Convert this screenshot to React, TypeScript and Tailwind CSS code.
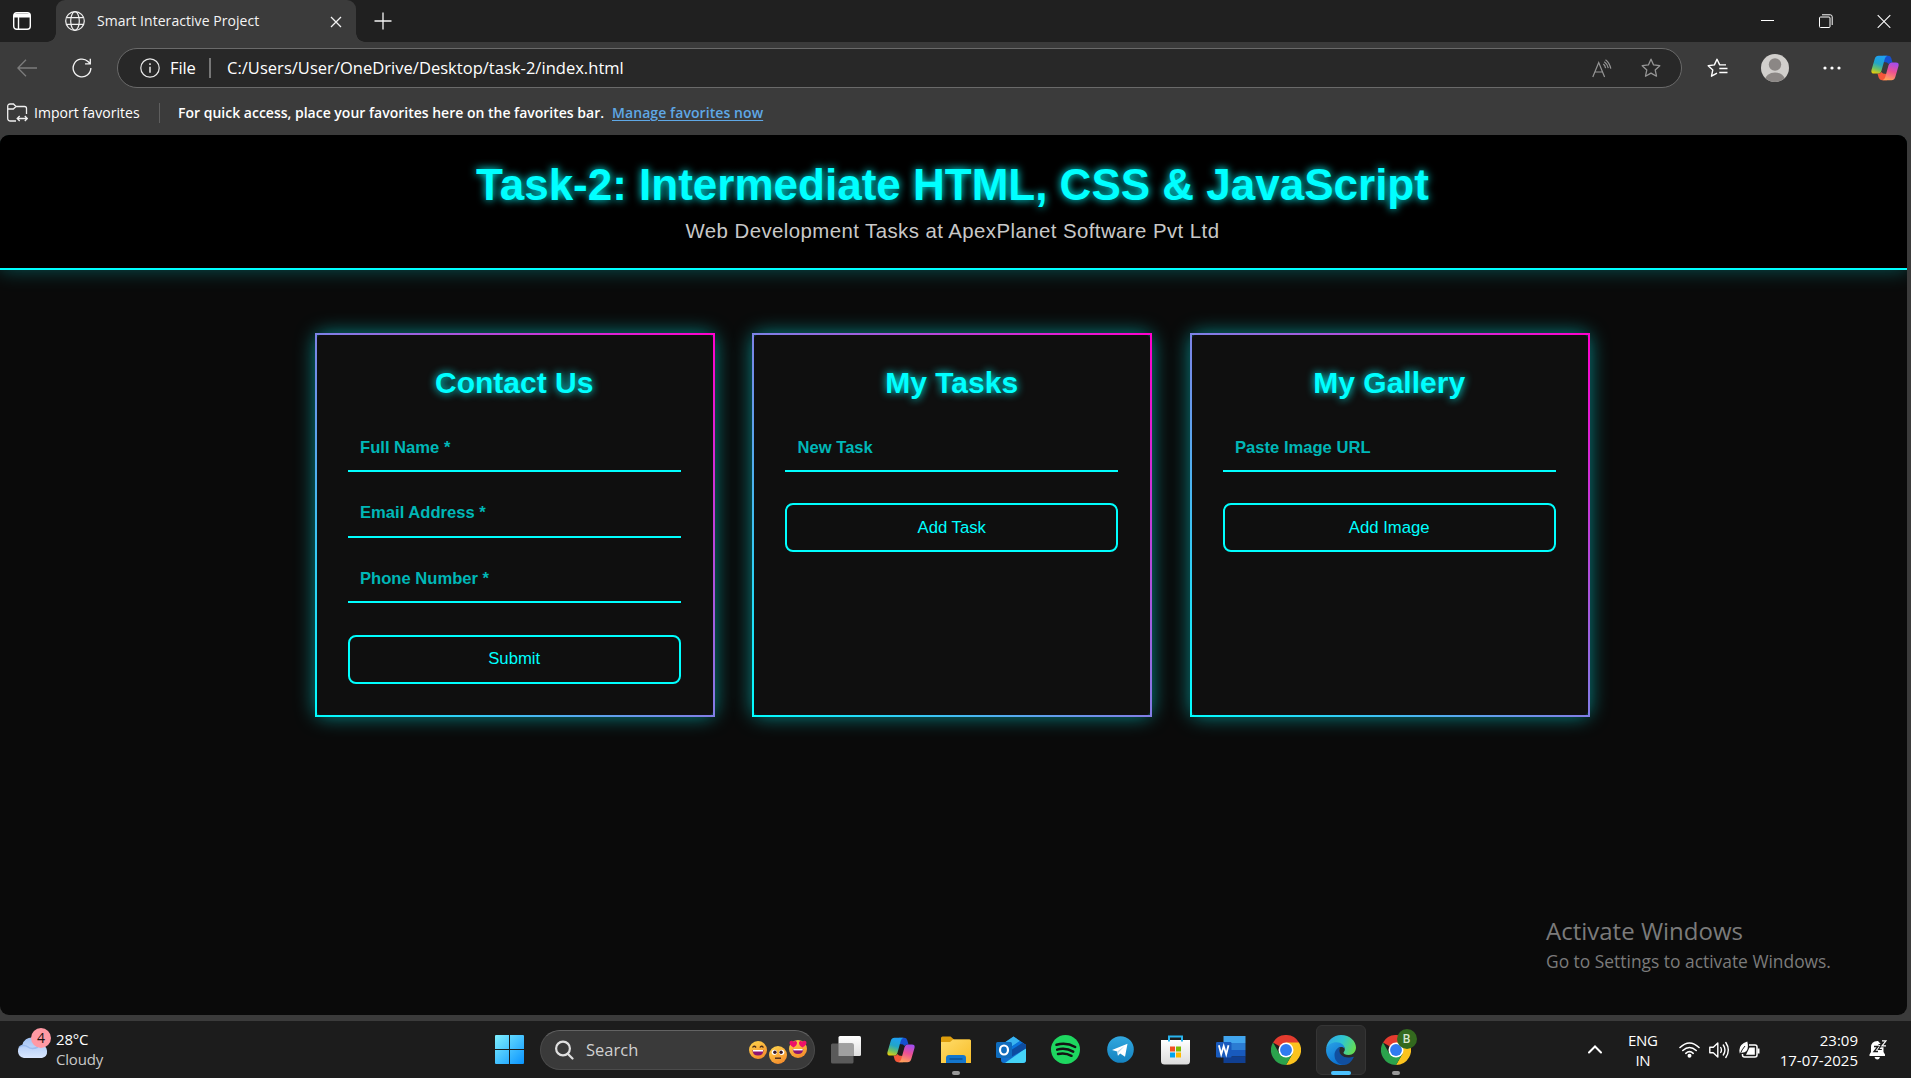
import React from "react";

const UI = "font-['Open_Sans','Noto_Sans',sans-serif]";

function CopilotIcon({ size, id }: { size: number; id: string }) {
  return (
    <svg width={size} height={size} viewBox="0 0 28 28">
      <defs>
        <linearGradient id={id + "a"} x1="0.4" y1="0" x2="0.1" y2="1">
          <stop offset="0" stopColor="#1ea0f0" />
          <stop offset="0.4" stopColor="#22a5c8" />
          <stop offset="0.7" stopColor="#6cc067" />
          <stop offset="1" stopColor="#f7d000" />
        </linearGradient>
        <linearGradient id={id + "b"} x1="0.7" y1="0" x2="0.4" y2="1">
          <stop offset="0" stopColor="#a04df0" />
          <stop offset="0.5" stopColor="#ee5093" />
          <stop offset="1" stopColor="#ffa05c" />
        </linearGradient>
      </defs>
      <path d="M12 1.800h5q2.600 0 3.300 2.400L21.500 8.500h-1q-2.200 0-3 1.500L16 8.500 12.500 8z" fill="#1650d0" />
      <path d="M16 26.200h-5q-2.600 0-3.300-2.400L6.500 19.500h1q2.200 0 3-1.500L12 19.500l3.500.5z" fill="#f4573a" />
      <path d="M7.500 1.800h9q-2 .5-2.700 3L10.400 17q-.7 2.500-3 2.500H3q-3.300 0-2.500-3.600L3.700 5q1-3.200 3.800-3.200z" fill={`url(#${id}a)`} />
      <path d="M20.500 26.200h-9q2-.5 2.700-3L17.600 11q.7-2.500 3-2.500H25q3.300 0 2.500 3.600L24.300 23q-1 3.200-3.800 3.200z" fill={`url(#${id}b)`} />
    </svg>
  );
}

function ChromeIcon() {
  return (
    <svg width="30" height="30" viewBox="0 0 48 48">
      <path d="M24 24 3.200 12A24 24 0 0 1 44.800 12z" fill="#e33b2e" />
      <path d="M24 24V12h20.800A24 24 0 0 1 24 48l10.400-18z" fill="#fcc31e" />
      <path d="m24 24 10.400 6L24 48A24 24 0 0 1 3.200 12l10.400 18z" fill="#2ba24c" />
      <circle cx="24" cy="24" r="12" fill="#fff" />
      <circle cx="24" cy="24" r="9.500" fill="#2f7bf0" />
    </svg>
  );
}

function EdgeIcon() {
  return (
    <svg width="30" height="30" viewBox="0 0 30 30">
      <defs>
        <linearGradient id="edgeTop" x1="0" y1="0.3" x2="1" y2="0.6">
          <stop offset="0" stopColor="#2fa8e8" />
          <stop offset="0.5" stopColor="#2fc6cf" />
          <stop offset="1" stopColor="#66dd50" />
        </linearGradient>
        <linearGradient id="edgeLeft" x1="0" y1="0" x2="0.6" y2="1">
          <stop offset="0" stopColor="#2aa3e6" />
          <stop offset="1" stopColor="#0a6fd0" />
        </linearGradient>
      </defs>
      <path d="M.2 13.500C1 5.500 7.500 0 15 0c9 0 15 6.200 15 12.500 0 4.500-3.300 7.500-7.300 7.500-3.500 0-5.200-1.300-5.200-2.300 0-.7 1.300-1.300 1.300-3.500 0-2.800-2.600-5-6.300-5C6 9.200 2 11 .2 13.500z" fill="url(#edgeTop)" />
      <path d="M.2 13.500C1.500 9.500 6 7.200 10.500 7.200c5 0 8 3 8.300 6.500-1-1.300-2.800-2-4.600-1.600-3 .8-4.700 3.900-4 8 .8 5 5.300 9.500 9.800 9C17 30.800 12 30.300 8 28 2.500 25-.6 19.500.2 13.500z" fill="url(#edgeLeft)" />
      <path d="M14.500 12.200c-1.800 2-1.400 5.500.8 7.800 2.300 2.300 6.200 2.900 9.600 2.200 1.800-.4 3.300-1 2.700.300C25.500 27 22 30 18 30c-5.500 0-9.500-4.500-9.500-10 0-4 2.500-7.200 6-7.800z" fill="#114f9f" />
    </svg>
  );
}

function Emoji({ kind }: { kind: "laugh" | "flat" | "love" }) {
  return (
    <svg width="18" height="18" viewBox="0 0 18 18" className="overflow-visible">
      <defs>
        <linearGradient id={"face" + kind} x1="0.2" y1="0" x2="0.7" y2="1">
          <stop offset="0" stopColor="#ffd24a" />
          <stop offset="1" stopColor="#f48b2c" />
        </linearGradient>
      </defs>
      <circle cx="9" cy="9" r="9" fill={`url(#face${kind})`} />
      {kind === "laugh" && (
        <>
          <path d="M3.500 6.500q1.500-2.500 3.600 0M10.900 6.500q1.500-2.500 3.600 0" stroke="#4a2b1a" strokeWidth="1.300" fill="none" />
          <path d="M3.500 9h11q0 5.500-5.500 5.500T3.500 9z" fill="#8d1470" />
          <path d="M4 9h10v1.500H4z" fill="#fff" />
        </>
      )}
      {kind === "flat" && (
        <>
          <circle cx="5.300" cy="6.300" r="2.600" fill="#fff" />
          <circle cx="12.700" cy="6.300" r="2.600" fill="#fff" />
          <circle cx="5.900" cy="6.300" r="1.700" fill="#3a1c2a" />
          <circle cx="12.100" cy="6.300" r="1.700" fill="#3a1c2a" />
          <path d="M6 12.200h6" stroke="#4a2b1a" strokeWidth="1.400" />
        </>
      )}
      {kind === "love" && (
        <>
          <path d="M4.500 7.500C1 5.500 0 3.500.7 1.700 1.800 0 3.800.6 4.500 2 5.500.5 7.600.8 8 2.600 8.300 4.800 6.500 6.500 4.500 7.500zM13.500 7.500c-2-1-3.800-2.700-3.500-4.900.4-1.800 2.500-2.100 3.500-.6.700-1.400 2.700-2 3.800-.3.700 1.800-.3 3.800-3.800 5.800z" fill="#ee1169" />
          <path d="M3.800 9h10.400q0 5-5.200 5T3.800 9z" fill="#8d1470" />
          <path d="M4.300 9h9.400v1.400H4.300z" fill="#fff" />
        </>
      )}
    </svg>
  );
}

function TabStrip() {
  return (
    <div className="flex h-[42px] items-stretch bg-[#202020]">
      <div className="flex w-[56px] items-center rounded-br-[10px] pl-[13px]">
        <svg width="18" height="18" viewBox="0 0 18 18" fill="none" stroke="#fff" strokeWidth="1.400">
          <rect x="0.700" y="0.700" width="16.600" height="16.600" rx="3" />
          <path d="M1 1.500h16v4H1z" fill="#fff" stroke="none" />
          <path d="M5.500 5v12" />
        </svg>
      </div>
      <div className="relative flex w-[300px] items-center rounded-t-[9px] bg-[#3b3b3b] pl-[9px]">
        <div className="absolute bottom-0 -left-[9px] h-[9px] w-[9px] bg-[radial-gradient(circle_at_0_0,#202020_8.5px,#3b3b3b_9px)]" />
        <div className="absolute -right-[9px] bottom-0 h-[9px] w-[9px] bg-[radial-gradient(circle_at_100%_0,#202020_8.5px,#3b3b3b_9px)]" />
        <svg width="20" height="20" viewBox="0 0 20 20" fill="none" stroke="#f0f0f0" strokeWidth="1.200">
          <circle cx="10" cy="10" r="9.300" />
          <ellipse cx="10" cy="10" rx="4.300" ry="9.300" />
          <path d="M1.500 6.700h17M1.500 13.300h17" />
        </svg>
        <span className="ml-[12px] w-[230px] text-[14px] leading-[20px] tracking-[0.05px] whitespace-nowrap text-[#f4f4f4]">Smart Interactive Project</span>
        <svg width="12" height="12" viewBox="0 0 12 12" stroke="#f4f4f4" strokeWidth="1.300" className="mt-[1px] ml-[3px]">
          <path d="M1 1l10 10M11 1L1 11" />
        </svg>
      </div>
      <svg width="18" height="18" viewBox="0 0 18 18" stroke="#f4f4f4" strokeWidth="1.300" className="mt-[12px] ml-[18px]">
        <path d="M9 .5v17M.5 9h17" />
      </svg>
      <div className="ml-auto flex items-start pt-[14px] pr-[20.5px]">
        <svg width="14" height="14" viewBox="0 0 14 14" stroke="#fff" strokeWidth="1" className="mr-[44px]">
          <path d="M0 6.500h13" />
        </svg>
        <svg width="14" height="14" viewBox="0 0 14 14" stroke="#fff" fill="none" className="mr-[44px]">
          <rect x="0.500" y="3" width="10.500" height="10.500" rx="1" />
          <path d="M3 .8h8.200q2 0 2 2V11" />
        </svg>
        <svg width="14" height="14" viewBox="0 0 14 14" stroke="#fff" strokeWidth="1.100">
          <path d="M.7 1.200l12.600 12.600M13.300 1.200L.7 13.800" />
        </svg>
      </div>
    </div>
  );
}

const STAR = "M10 1.200l2.600 5.700 6.200.8-4.600 4.200 1.300 6.300L10 15.100l-5.500 3.100 1.300-6.300L1.200 7.700l6.200-.8z";

function Toolbar() {
  return (
    <div className="flex h-[52px] items-center">
      <svg width="20" height="18" viewBox="0 0 20 18" fill="none" stroke="#7c7c7c" strokeWidth="1.300" className="ml-[17px]">
        <path d="M20 9H1M9 .8L.9 9 9 17.200" />
      </svg>
      <svg width="20" height="20" viewBox="0 0 21 21" fill="none" stroke="#f4f4f4" strokeWidth="1.400" className="ml-[35px]">
        <path d="M19.800 10.500a9.300 9.300 0 1 1-3-6.900L19 5.900M19.200 .8v5.400h-5.500" />
      </svg>
      <div className="ml-[25px] flex h-[40px] w-[1565px] items-center rounded-full border border-[#6a6a6a] bg-[#282828] pl-[22px]">
        <svg width="20" height="20" viewBox="0 0 20 20" fill="none" stroke="#e8e8e8" strokeWidth="1.200">
          <circle cx="10" cy="10" r="9.200" />
          <path d="M10 8.800v6M10 5.300v1.700" strokeWidth="1.500" />
        </svg>
        <span className="ml-[10px] w-[29px] text-[16.5px] tracking-[-0.1px] text-white">File</span>
        <span className="ml-[10px] h-[20px] w-[2px] bg-[#777]" />
        <span className="ml-[16px] text-[16.5px] tracking-[0.03px] whitespace-nowrap text-white">C:/Users/User/OneDrive/Desktop/task-2/index.html</span>
        <div className="mr-[20px] ml-auto flex items-center gap-[29px]">
          <svg width="20" height="19" viewBox="0 0 20 19" fill="none" stroke="#969696" strokeWidth="1.200">
            <path d="M.8 18L6.700 3.500 12.600 18M2.900 13h7.600" />
            <path d="M11.300 5q1.800 1.200 2.300 4.200M12.300 2.700q3 2 4 6.500M13.500 .7q4 2.800 5.300 9" />
          </svg>
          <svg width="20" height="20" viewBox="0 0 20 20" fill="none" stroke="#969696" strokeWidth="1.300" strokeLinejoin="round">
            <path d={STAR} />
          </svg>
        </div>
      </div>
      <svg width="21" height="20" viewBox="0 0 21 20" fill="none" stroke="#fff" strokeWidth="1.400" strokeLinejoin="round" className="ml-[25px]">
        <path d="M19 6.900h-6.300L10 1.200 7.400 6.900l-6.200.8 4.600 4.200-1.300 6.300L10 15.100M12.300 10.500H20.500M12.300 14.500H20.500" />
      </svg>
      <svg width="28" height="28" viewBox="0 0 28 28" className="ml-[33px]">
        <clipPath id="avatar"><circle cx="14" cy="14" r="14" /></clipPath>
        <g clipPath="url(#avatar)">
          <path d="M0 0h28v28H0z" fill="#d1cfcc" />
          <circle cx="14" cy="10.500" r="6.200" fill="#8b8785" />
          <ellipse cx="14" cy="26" rx="10" ry="7.500" fill="#8b8785" />
        </g>
      </svg>
      <svg width="18" height="4" viewBox="0 0 18 4" fill="#fff" className="mr-[30px] ml-[34px]">
        <circle cx="2" cy="2" r="1.600" /><circle cx="9" cy="2" r="1.600" /><circle cx="16" cy="2" r="1.600" />
      </svg>
      <CopilotIcon size={28} id="cpTop" />
    </div>
  );
}

function FavoritesBar() {
  return (
    <div className="flex h-[41px] items-center pb-[3px] text-[14px] leading-[20px] whitespace-nowrap text-white">
      <svg width="21" height="20" viewBox="0 0 21 20" fill="none" stroke="#f0f0f0" strokeWidth="1.300" className="-mt-[1px] ml-[7px]">
        <path d="M9 18H3.500Q.7 18 .7 15.200V3.500Q.7 1 3.200 1h3.300L9 3.500h8.500q2 0 2 2V11M.8 6h5.500L9 3.500" />
        <path d="M10.500 15.500H20M12.700 13l-2.500 2.500 2.500 2.500M17.800 13l2.500 2.500-2.500 2.500" />
      </svg>
      <span className="ml-[6px] w-[125px] tracking-[0.05px]">Import favorites</span>
      <span className="h-[20px] w-px bg-[#5e5e5e]" />
      <span className="ml-[18px] w-[434px] font-semibold">For quick access, place your favorites here on the favorites bar.</span>
      <a className="font-semibold tracking-[0.08px] text-[#5fa8e6] underline underline-offset-2">Manage favorites now</a>
    </div>
  );
}

function Field({ label }: { label: string }) {
  return (
    <div className="mb-[23.55px] h-[42px] border-b-2 border-[#00ffff] pt-[7.4px] pl-[12.5px] text-[16.6px] leading-[20px] font-bold text-[#00b7b7]">
      {label}
    </div>
  );
}

function Card({ title, fields, action }: { title: string; fields: string[]; action: string }) {
  return (
    <section className="h-[384px] w-[400px] rounded-[11px] border-2 bg-[#0f0f0f] pr-[31.6px] pl-[31px] pt-[30px] shadow-[0_0_19px_rgba(0,255,255,0.5)] [border-image:linear-gradient(45deg,#00ffff,#ff00cc)_1]">
      <h2 className="mb-[30.15px] text-center text-[30px] leading-[35px] font-bold text-[#00ffff] [text-shadow:0_0_8px_#00ffff]">{title}</h2>
      {fields.map((f) => (
        <Field key={f} label={f} />
      ))}
      <button className="mt-[31.3px] block h-[49px] w-full rounded-[8px] border-2 border-[#00ffff] text-[16.7px] leading-[20px] text-[#00ffff]">{action}</button>
    </section>
  );
}

function Page() {
  return (
    <main className="relative h-[880px] w-[1907px] overflow-hidden rounded-[9px] bg-[#0a0a0a] font-['Liberation_Sans',Arial,sans-serif]">
      <header className="h-[135px] border-b-2 border-[#00ffff] bg-black pt-[24px] pr-[2px] text-center shadow-[0_0_19px_rgba(0,255,255,0.3)]">
        <h1 className="text-[44px] leading-[52px] font-bold text-[#00ffff] [text-shadow:0_0_9px_#00ffff]">Task-2: Intermediate HTML, CSS &amp; JavaScript</h1>
        <p className="mt-[8px] text-[20.4px] leading-[24px] tracking-[0.43px] text-[#c8c8c8]">Web Development Tasks at ApexPlanet Software Pvt Ltd</p>
      </header>
      <div className="flex justify-center gap-[37.5px] pt-[63px] pr-[3px]">
        <Card title="Contact Us" fields={["Full Name *", "Email Address *", "Phone Number *"]} action="Submit" />
        <Card title="My Tasks" fields={["New Task"]} action="Add Task" />
        <Card title="My Gallery" fields={["Paste Image URL"]} action="Add Image" />
      </div>
      <div className={"absolute top-[779px] left-[1546px] whitespace-nowrap text-[#7b7b7b] " + UI}>
        <div className="text-[24px] leading-[34px]">Activate Windows</div>
        <div className="text-[17.4px] leading-[26px]">Go to Settings to activate Windows.</div>
      </div>
    </main>
  );
}

function Slot({ children, mark, active }: { children: React.ReactNode; mark?: boolean; active?: boolean }) {
  return (
    <div className="relative flex h-[57px] w-[55px] items-center justify-center">
      {active && <div className="absolute top-[4px] left-[3px] h-[50px] w-[50px] rounded-[6px] border border-[#353535] bg-[#2a2a2a]" />}
      <div className="relative">{children}</div>
      {mark && <div className="absolute bottom-[3px] h-[4px] w-[8px] rounded-full bg-[#9a9a9a]" />}
      {active && <div className="absolute bottom-[3px] h-[4px] w-[20px] rounded-full bg-[#4cc2ff]" />}
    </div>
  );
}

function Taskbar() {
  return (
    <footer className={"mt-[6px] flex h-[57px] items-center bg-[#1c1c1c] " + UI}>
      <div className="flex w-[500px] shrink-0 items-center pl-[16px]">
        <div className="relative h-[40px] w-[32px]">
          <svg width="32" height="24" viewBox="0 0 32 24" className="absolute top-[7px] left-0">
            <defs>
              <linearGradient id="cloud" x1="0" y1="0" x2="0" y2="1">
                <stop offset="0" stopColor="#9fc0f2" />
                <stop offset="1" stopColor="#d9e7ff" />
              </linearGradient>
            </defs>
            <path d="M8 21a7 7 0 0 1-1.500-13.500A9.500 9.500 0 0 1 25 8a6.600 6.600 0 0 1 1 13z" fill="url(#cloud)" />
            <path d="M3 10q5-3 9 0t10 0" stroke="#86acea" strokeWidth="1.500" fill="none" opacity=".6" />
          </svg>
          <div className="absolute -top-[2px] left-[15px] flex h-[20px] w-[20px] items-center justify-center rounded-full bg-[#ff99a4] text-[14px] text-[#201010]">4</div>
        </div>
        <div className="-mt-[2px] ml-[8px] text-[15px] leading-[20px] tracking-[-0.2px] text-[#c8c8c8]">
          <div className="text-white">28°C</div>
          <div>Cloudy</div>
        </div>
      </div>
      <svg width="29" height="29" viewBox="0 0 29 29" className="-ml-[5px] shrink-0">
        <defs>
          <linearGradient id="win" x1="0" y1="0" x2="1" y2="1">
            <stop offset="0" stopColor="#7ff0ff" />
            <stop offset="1" stopColor="#0a94ff" />
          </linearGradient>
        </defs>
        <path d="M0 1q0-1 1-1h13v14H0zM15 0h13q1 0 1 1v13H15zM0 15h14v14H1q-1 0-1-1zM15 15h14v13q0 1-1 1H15z" fill="url(#win)" />
      </svg>
      <div className="ml-[16px] flex h-[40px] w-[275px] shrink-0 items-center rounded-full border border-[#4b4b4b] border-t-[#636363] bg-[#3a3a3a] pl-[14px]">
        <svg width="19" height="20" viewBox="0 0 19 20" fill="none" stroke="#e0e0e0" strokeWidth="2.200" strokeLinecap="round">
          <circle cx="8" cy="8.500" r="6.900" />
          <path d="M13 14l4.500 4.500" />
        </svg>
        <span className="ml-[12px] text-[16.5px] leading-[22px] text-[#d0d0d0]">Search</span>
        <div className="mr-[7px] ml-auto flex gap-[2px]">
          <div><Emoji kind="laugh" /></div>
          <div className="mt-[5px] -mb-[5px]"><Emoji kind="flat" /></div>
          <div className="-mt-[1px]"><Emoji kind="love" /></div>
        </div>
      </div>
      <div className="ml-[3px] flex shrink-0">
        <Slot>
          <svg width="30" height="28" viewBox="0 0 30 28">
            <defs>
              <linearGradient id="tv" x1="0" y1="0" x2="0" y2="1">
                <stop offset="0" stopColor="#fff" />
                <stop offset="1" stopColor="#dedede" />
              </linearGradient>
            </defs>
            <rect x="7.500" width="22.500" height="20" rx="1.500" fill="url(#tv)" />
            <rect y="7.500" width="22.500" height="20" rx="1.500" fill="#5a5a5a" />
            <path d="M7.500 7.500h15V20h-15z" fill="#a0a0a0" />
          </svg>
        </Slot>
        <Slot><CopilotIcon size={28} id="cpTask" /></Slot>
        <Slot mark>
          <svg width="30" height="27" viewBox="0 0 30 27">
            <defs>
              <linearGradient id="fold" x1="0" y1="0" x2="1" y2="1">
                <stop offset="0" stopColor="#ffdc6a" />
                <stop offset="1" stopColor="#f8bd28" />
              </linearGradient>
            </defs>
            <path d="M0 2q0-1.500 1.500-1.500h8L13 3.500h15.500Q30 3.500 30 5v5H0z" fill="#dd9d0c" />
            <path d="M0 6h9l3-2.500h16.500Q30 3.500 30 5v22H0z" fill="url(#fold)" />
            <path d="M5 27v-5q0-3 3-3h14q3 0 3 3v5z" fill="#1476cd" />
            <path d="M8.500 23h13" stroke="#0b4f93" strokeWidth="1.400" />
          </svg>
        </Slot>
        <Slot>
          <svg width="30" height="27" viewBox="0 0 30 27">
            <path d="M5 9L17.500.5 30 9v15q0 3-3 3H8q-3 0-3-3z" fill="#0f6fd0" />
            <path d="M5 9L17.500.5 24 5 10 14z" fill="#38b4f0" />
            <path d="M24 5l6 4-13 9-5-4z" fill="#0a74dc" />
            <path d="M30 12v12q0 3-3 3H9z" fill="#45d3f7" />
            <path d="M26.500 6.800L30 9v3.500L16 20.500v-7z" fill="#0d4ca0" />
            <rect y="6" width="16" height="16" rx="1.500" fill="#0f6cbd" />
            <ellipse cx="8" cy="14" rx="4" ry="4.500" fill="none" stroke="#fff" strokeWidth="2.200" />
          </svg>
        </Slot>
        <Slot>
          <svg width="29" height="29" viewBox="0 0 29 29">
            <circle cx="14.500" cy="14.500" r="14.500" fill="#1ed760" />
            <path d="M5.500 9.800q10-2.700 18.700 2.200M6.200 14.600q8.500-2.300 16 2M7 19q7.300-1.700 13.500 1.800" fill="none" stroke="#141414" strokeWidth="2.500" strokeLinecap="round" />
          </svg>
        </Slot>
        <Slot>
          <svg width="27" height="27" viewBox="0 0 27 27">
            <defs>
              <linearGradient id="tg" x1="0" y1="0" x2="0" y2="1">
                <stop offset="0" stopColor="#31a8df" />
                <stop offset="1" stopColor="#1582c0" />
              </linearGradient>
            </defs>
            <circle cx="13.500" cy="13.500" r="13.300" fill="url(#tg)" />
            <path d="M5 14L20.500 7.800 18 20.800l-4.800-3.400-2.200 2.300-.8-4.200z" fill="#fff" />
            <path d="M10.200 15.500l7.500-5.500-6.200 6.500-.6 3.200z" fill="#b7d7ea" />
          </svg>
        </Slot>
        <Slot>
          <svg width="29" height="30" viewBox="0 0 29 30">
            <defs>
              <linearGradient id="store" x1="0" y1="0" x2="0" y2="1">
                <stop offset="0" stopColor="#fff" />
                <stop offset="1" stopColor="#dcdcdc" />
              </linearGradient>
            </defs>
            <path d="M0 5h29v21q0 3.500-3.500 3.500h-22Q0 29.500 0 26z" fill="url(#store)" />
            <path d="M8 6.500V1.500h13v5" fill="none" stroke="#28b4ee" strokeWidth="2" />
            <path d="M9 11.500h5v5H9z" fill="#f25022" />
            <path d="M15 11.500h5v5h-5z" fill="#7fba00" />
            <path d="M9 17.500h5v5H9z" fill="#00a4ef" />
            <path d="M15 17.500h5v5h-5z" fill="#ffb900" />
          </svg>
        </Slot>
        <Slot>
          <svg width="30" height="27" viewBox="0 0 30 27">
            <path d="M7.500 0h22v7h-22z" fill="#41a5ee" />
            <path d="M7.500 7h22v7h-22z" fill="#2b7cd3" />
            <path d="M7.500 14h22v6.500h-22z" fill="#185abd" />
            <path d="M7.500 20.500h22V27h-22z" fill="#103f91" />
            <rect y="6" width="15.500" height="15.500" rx="1.200" fill="#185abd" />
            <path d="M2.900 9.300l2.300 9 2.500-8.300 2.500 8.300 2.300-9" fill="none" stroke="#fff" strokeWidth="1.800" />
          </svg>
        </Slot>
        <Slot><ChromeIcon /></Slot>
        <Slot active><EdgeIcon /></Slot>
        <Slot mark>
          <ChromeIcon />
          <div className="absolute -top-[6px] left-[16px] flex h-[20px] w-[20px] items-center justify-center rounded-full bg-[#33691e] text-[12px] font-semibold text-[#d8e6d0]">B</div>
        </Slot>
      </div>
      <div className="ml-auto flex shrink-0 items-center text-[15px] leading-[20px] text-white">
        <svg width="14" height="9" viewBox="0 0 14 9" fill="none" stroke="#fff" strokeWidth="2" strokeLinecap="round" className="mr-[26px]">
          <path d="M1 7.500l6-6 6 6" />
        </svg>
        <div className="mr-[21px] flex w-[30px] flex-col items-center tracking-[-0.4px]">
          <span>ENG</span>
          <span>IN</span>
        </div>
        <svg width="21" height="17" viewBox="0 0 21 17" fill="none" stroke="#fff" strokeWidth="1.600" strokeLinecap="round" className="mr-[9px]">
          <path d="M1 6.500q9.500-9 19 0M3.800 9.500q6.700-6 13.400 0M6.800 12.300q3.700-3.300 7.400 0" />
          <circle cx="10.500" cy="14.800" r="1.200" fill="#fff" />
        </svg>
        <svg width="21" height="18" viewBox="0 0 21 18" fill="none" stroke="#fff" strokeWidth="1.400" strokeLinecap="round" strokeLinejoin="round" className="mr-[9px]">
          <path d="M.8 6.300v5.400h3.500L8.800 16V2L4.300 6.300z" />
          <path d="M11.700 6.500q1.500 2.500 0 5M14.300 4q3.300 5 0 10M16.800 1.500q5 7.500 0 15" />
        </svg>
        <svg width="21" height="18" viewBox="0 0 21 18" fill="none" stroke="#fff" strokeWidth="1.500" className="mr-[20px]">
          <path d="M10 4h6q2 0 2 2v8q0 2-2 2H5.500q-2 0-2-2v-1" />
          <path d="M10.500 6.500h5.300v7.200H7z" fill="#fff" stroke="none" />
          <path d="M18.500 7.500H20.500v5H18.500z" fill="#fff" stroke="none" />
          <path d="M.8 12.500Q-1.500 3.500 8.300.5q2.500 11-5.300 11.300z" fill="#fff" stroke="none" />
          <path d="M.5 14.500Q3 8 6 5" stroke="#1c1c1c" strokeWidth="1" />
        </svg>
        <div className="text-right">23:09<br />17-07-2025</div>
        <svg width="18" height="20" viewBox="0 0 18 20" className="mr-[24px] ml-[11px]">
          <path d="M8.500 1Q2 1 2 7.500V12L.5 14.500V16H16v-1.500L14.500 12V7L9 1zM5.500 17h5.500q-.7 2.500-2.700 2.500T5.500 17z" fill="#fff" />
          <path d="M5 6.500h4L5 11.500h4" fill="none" stroke="#1c1c1c" strokeWidth="1.300" />
          <path d="M9.500 4.500h3.300l-3.300 5h3.300" fill="none" stroke="#1c1c1c" strokeWidth="1.200" />
          <path d="M13 .8h4l-4 5h4" fill="none" stroke="#1c1c1c" strokeWidth="3" />
          <path d="M13 .8h4l-4 5h4" fill="none" stroke="#fff" strokeWidth="1.200" />
        </svg>
      </div>
    </footer>
  );
}

export default function App() {
  return (
    <div className={"flex h-[1078px] w-[1911px] flex-col overflow-hidden bg-[#3b3b3b] " + UI}>
      <TabStrip />
      <Toolbar />
      <FavoritesBar />
      <Page />
      <Taskbar />
    </div>
  );
}
